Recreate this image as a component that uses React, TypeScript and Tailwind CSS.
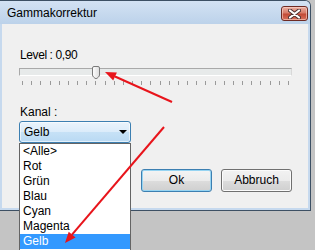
import React from "react";

const channels = ["<Alle>", "Rot", "Grün", "Blau", "Cyan", "Magenta", "Gelb"];

function CloseButton() {
  return (
    <div className="mt-[5px] mr-[2px] w-[27px] h-[15px] rounded-[3px] border border-[#6e2b24] bg-[linear-gradient(#eab1a4,#d77b69_45%,#c24a36_55%,#d8715c)] shadow-[inset_0_0_0_1px_rgba(255,220,210,0.55)] flex items-center justify-center">
      <svg width="13" height="10" viewBox="0 0 13 10">
        <path d="M2 1.5 L11 8.5 M11 1.5 L2 8.5" stroke="#4a3030" strokeWidth="4" strokeLinecap="round" />
        <path d="M2 1.5 L11 8.5 M11 1.5 L2 8.5" stroke="#ffffff" strokeWidth="2.2" strokeLinecap="round" />
      </svg>
    </div>
  );
}

function Slider() {
  const ticks = Array.from({ length: 30 });
  return (
    <div className="relative w-[273px] mt-[5px]">
      <div className="h-[8px] border border-[#a9a9a9] border-b-white border-r-[#d8d8d8] bg-[#e7eaea]" />
      {/* thumb */}
      <svg className="absolute left-[73px] top-[-2px]" width="8" height="13" viewBox="0 0 8 13">
        <defs>
          <linearGradient id="thumb" x1="0" y1="0" x2="1" y2="0">
            <stop offset="0" stopColor="#ffffff" />
            <stop offset="1" stopColor="#dcdcdc" />
          </linearGradient>
        </defs>
        <path
          d="M0.5 2 Q0.5 0.5 2 0.5 H6 Q7.5 0.5 7.5 2 V9 Q7.5 10 6.5 11 L5 12.3 Q4 12.8 3 12.3 L1.5 11 Q0.5 10 0.5 9 Z"
          fill="url(#thumb)"
          stroke="#7a7a7a"
        />
      </svg>
      <div className="mt-[5px] h-[4px] px-[3px] flex justify-between">
        {ticks.map((_, i) => (
          <div key={i} className="w-[1px] h-[4px] bg-[#9a9a9a]" />
        ))}
      </div>
    </div>
  );
}

export default function App() {
  return (
    <div className="relative w-[315px] h-[250px] overflow-hidden bg-[#c4c4c4] font-['Liberation_Sans',Arial,sans-serif] text-[12px] text-black">
      <div className="w-[311px] h-[211px] flex flex-col rounded-tr-[6px] border-t border-r border-b border-[#3d5064] bg-[#c6d9ee]">
        <div className="h-[23px] flex justify-between rounded-tr-[5px] bg-[linear-gradient(#d3e2f3,#bcd2ea)]">
          <span className="pl-[7px] pt-[5px] leading-[15px]">Gammakorrektur</span>
          <CloseButton />
        </div>
        <div className="ml-[2px] w-[306px] h-[184px] bg-[#f0f0f0] pl-[17px] flex flex-col">
          <div className="mt-[24px] ml-[1px] leading-[15px] tracking-[-0.4px]">Level : 0,90</div>
          <Slider />
          <div className="mt-[20px] ml-[1px] leading-[15px]">Kanal :</div>
          <div className="mt-[1px] w-[112px] h-[22px] rounded-[3px] border border-[#3c7fb1] bg-[linear-gradient(#eaf4fc,#dcecfa_48%,#c6e1f6_52%,#b9d9f3)] shadow-[inset_0_0_0_1px_rgba(255,255,255,0.6)] flex items-center justify-between pl-[4px] pr-[3px]">
            <span className="leading-[15px]">Gelb</span>
            <svg width="8" height="4" viewBox="0 0 8 4">
              <path d="M0 0 H8 L4 4 Z" fill="#000" />
            </svg>
          </div>
          <div className="mt-[26px] pr-[16px] flex justify-end gap-[9px]">
            <button className="w-[71px] h-[23px] rounded-[3px] border border-[#3c7fb1] bg-[linear-gradient(#f4f4f4,#ebebeb_50%,#dddddd_50%,#cfcfcf)] shadow-[inset_0_0_0_1px_#96d4f2] leading-[15px]">
              Ok
            </button>
            <button className="w-[71px] h-[23px] rounded-[3px] border border-[#707070] bg-[linear-gradient(#f2f2f2,#ebebeb_50%,#dddddd_50%,#cfcfcf)] shadow-[inset_0_0_0_1px_#fbfbfb] leading-[15px]">
              Abbruch
            </button>
          </div>
        </div>
      </div>

      {/* open dropdown list */}
      <div className="absolute left-[19px] top-[143px] w-[112px] h-[120px] border border-[#646464] bg-white">
        {channels.map((c) => (
          <div
            key={c}
            className={
              c === "Gelb"
                ? "h-[15px] leading-[15px] pl-[3px] bg-[#3399ff] text-white"
                : "h-[15px] leading-[15px] pl-[3px]"
            }
          >
            {c}
          </div>
        ))}
      </div>

      {/* annotation arrows */}
      <svg className="absolute left-0 top-0 pointer-events-none" width="315" height="250" viewBox="0 0 315 250">
        <line x1="172" y1="102" x2="115" y2="76.5" stroke="#e8141b" strokeWidth="2" />
        <polygon points="105,72 116.9,72.4 113.2,80.6" fill="#e8141b" />
        <line x1="164" y1="127" x2="72" y2="234.6" stroke="#e8141b" strokeWidth="2" />
        <polygon points="65,243 75.6,237.5 68.7,231.7" fill="#e8141b" />
      </svg>
    </div>
  );
}
